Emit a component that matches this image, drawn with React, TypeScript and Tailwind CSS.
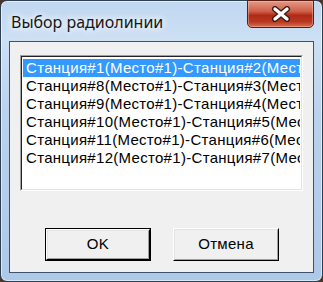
import React from 'react';

const rows = [
  'Станция#1(Место#1)-Станция#2(Место#1)',
  'Станция#8(Место#1)-Станция#3(Место#1)',
  'Станция#9(Место#1)-Станция#4(Место#1)',
  'Станция#10(Место#1)-Станция#5(Место#1)',
  'Станция#11(Место#1)-Станция#6(Место#1)',
  'Станция#12(Место#1)-Станция#7(Место#1)',
];

const CloseGlyph = () => (
  <svg width="20" height="16" viewBox="0 0 20 16">
    <path d="M4 3 L16 13 M16 3 L4 13" stroke="#3a1a14" strokeWidth="6" strokeLinecap="round" />
    <path d="M4 3 L16 13 M16 3 L4 13" stroke="#ffffff" strokeWidth="3.4" strokeLinecap="round" />
  </svg>
);

const ClassicButton: React.FC<{ label: string; isDefault?: boolean }> = ({ label, isDefault }) => (
  <div className={`w-[106px] h-[33px] ${isDefault ? 'border border-black' : ''}`}>
    <div className="w-full h-full border border-t-white border-l-white border-b-black border-r-black">
      <div className="w-full h-full border border-t-[#e3e3e3] border-l-[#e3e3e3] border-b-[#a0a0a0] border-r-[#a0a0a0] bg-[#f0f0f0] flex items-center justify-center text-[15px] tracking-[0.3px] text-black font-['Liberation_Sans',sans-serif]">
        {label}
      </div>
    </div>
  </div>
);

export default function App() {
  return (
    <div className="w-[323px] h-[282px] bg-[#4a3628]">
      <div className="relative w-[323px] h-[282px] rounded-[7px] border border-[#2f3f52] bg-[linear-gradient(180deg,#c0d7f0_0%,#cde0f4_14%,#b9d2ed_40%,#adc9e8_100%)] shadow-[inset_0_0_0_1px_rgba(255,255,255,0.55)] flex flex-col px-[8px] pb-[8px]">
        {/* Title bar */}
        <div className="h-[40px] flex items-start pt-[11px] pl-[2px]">
          <span className="text-[16px] leading-[20px] text-[#161616] font-['Noto_Sans',sans-serif] [text-shadow:0_0_6px_#fff,0_0_10px_#fff]">
            Выбор радиолинии
          </span>
        </div>
        <div className="absolute top-[-1px] right-[8px] w-[67px] h-[28px] rounded-b-[5px] border border-[#5a1d14] bg-[linear-gradient(180deg,#e39a88_0%,#cf5f48_40%,#b02a16_55%,#b93822_80%,#d9704f_100%)] shadow-[inset_0_0_0_1px_rgba(255,210,200,0.4)] flex items-center justify-center">
          <CloseGlyph />
        </div>

        {/* Client area */}
        <div className="flex-1 border border-[#3f5269] bg-[#f0f0f0] flex flex-col pt-[13px] pl-[10px]">
          <div className="w-[283px] h-[136px] border border-t-[#a0a0a0] border-l-[#a0a0a0] border-b-white border-r-white">
            <div className="w-full h-full border border-t-[#222] border-l-[#222] border-b-[#e3e3e3] border-r-[#e3e3e3] bg-white overflow-hidden pt-[2px] px-[1px]">
              {rows.map((r, i) => (
                <div
                  key={i}
                  className={`h-[18px] leading-[18px] pl-[3px] whitespace-nowrap overflow-hidden text-[15px] tracking-[0.3px] font-['Liberation_Sans',sans-serif] ${
                    i === 0 ? 'bg-[#3399ff] text-white' : 'text-black'
                  }`}
                >
                  {r}
                </div>
              ))}
            </div>
          </div>
          <div className="flex gap-[22px] mt-[37px] pl-[25px]">
            <ClassicButton label="OK" isDefault />
            <ClassicButton label="Отмена" />
          </div>
        </div>
      </div>
    </div>
  );
}
